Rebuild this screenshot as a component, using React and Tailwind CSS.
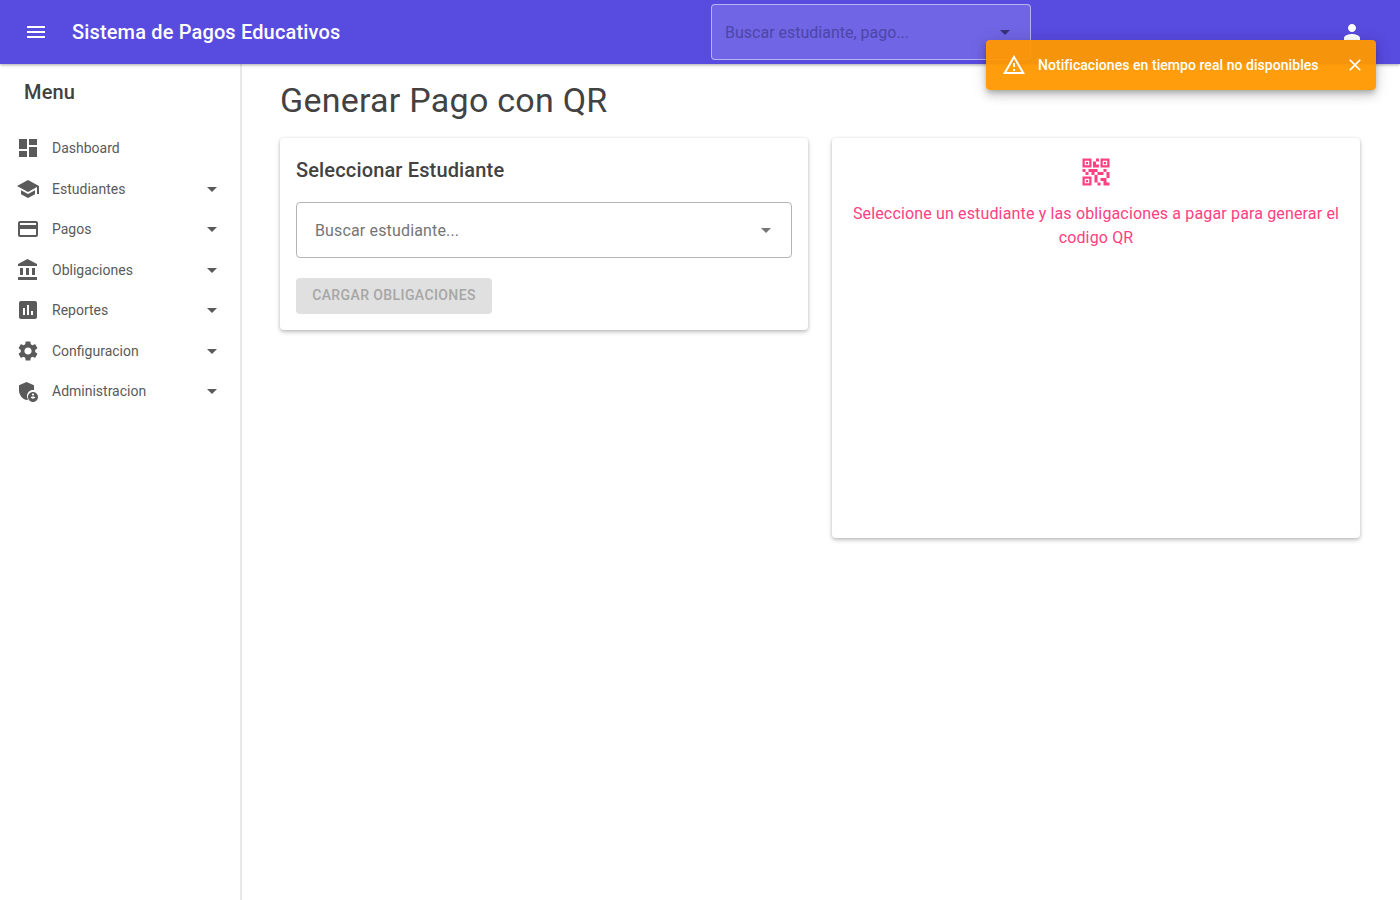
import React from 'react';

const Icon = ({ d, className = 'w-6 h-6', children }) => (
  <svg viewBox="0 0 24 24" fill="currentColor" className={className}>
    {d && <path d={d} />}
    {children}
  </svg>
);

const icons = {
  menu: 'M3 18h18v-2H3v2zm0-5h18v-2H3v2zm0-7v2h18V6H3z',
  dashboard: 'M3 13h8V3H3v10zm0 8h8v-6H3v6zm10 0h8V11h-8v10zm0-18v6h8V3h-8z',
  school: 'M5 13.18v4L12 21l7-3.82v-4L12 17l-7-3.82zM12 3 1 9l11 6 9-4.91V17h2V9L12 3z',
  payment: 'M20 4H4c-1.11 0-1.99.89-1.99 2L2 18c0 1.11.89 2 2 2h16c1.11 0 2-.89 2-2V6c0-1.11-.89-2-2-2zm0 14H4v-6h16v6zm0-10H4V6h16v2z',
  bank: 'M4 10v7h3v-7H4zm6 0v7h3v-7h-3zM2 22h19v-3H2v3zm14-12v7h3v-7h-3zm-4.5-9L2 6v2h19V6l-9.5-5z',
  assessment: 'M19 3H5c-1.1 0-2 .9-2 2v14c0 1.1.9 2 2 2h14c1.1 0 2-.9 2-2V5c0-1.1-.9-2-2-2zM9 17H7v-7h2v7zm4 0h-2V7h2v10zm4 0h-2v-4h2v4z',
  settings: 'M19.14 12.94c.04-.3.06-.61.06-.94 0-.32-.02-.64-.07-.94l2.03-1.58c.18-.14.23-.41.12-.61l-1.92-3.32c-.12-.22-.37-.29-.59-.22l-2.39.96c-.5-.38-1.03-.7-1.62-.94l-.36-2.54c-.04-.24-.24-.41-.48-.41h-3.84c-.24 0-.43.17-.47.41l-.36 2.54c-.59.24-1.13.57-1.62.94l-2.39-.96c-.22-.08-.47 0-.59.22L2.74 8.87c-.12.21-.08.47.12.61l2.03 1.58c-.05.3-.09.63-.09.94s.02.64.07.94l-2.03 1.58c-.18.14-.23.41-.12.61l1.92 3.32c.12.22.37.29.59.22l2.39-.96c.5.38 1.03.7 1.62.94l.36 2.54c.05.24.24.41.48.41h3.84c.24 0 .44-.17.47-.41l.36-2.54c.59-.24 1.13-.56 1.62-.94l2.39.96c.22.08.47 0 .59-.22l1.92-3.32c.12-.22.07-.47-.12-.61l-2.01-1.58zM12 15.6c-1.98 0-3.6-1.62-3.6-3.6s1.62-3.6 3.6-3.6 3.6 1.62 3.6 3.6-1.62 3.6-3.6 3.6z',
  admin: 'M17 11c.34 0 .67.04 1 .09V6.27L10.5 3 3 6.27v4.91c0 4.54 3.2 8.79 7.5 9.82.55-.13 1.08-.32 1.6-.55-.69-.98-1.1-2.17-1.1-3.45 0-3.31 2.69-6 6-6zM17 13c-2.76 0-5 2.24-5 5s2.24 5 5 5 5-2.24 5-5-2.24-5-5-5zm0 1.38c.62 0 1.12.51 1.12 1.12s-.51 1.12-1.12 1.12-1.12-.51-1.12-1.12.5-1.12 1.12-1.12zm0 5.37c-.93 0-1.74-.46-2.24-1.17.05-.72 1.51-1.08 2.24-1.08s2.19.36 2.24 1.08c-.5.71-1.31 1.17-2.24 1.17z',
  person: 'M12 12c2.21 0 4-1.79 4-4s-1.79-4-4-4-4 1.79-4 4 1.79 4 4 4zm0 2c-2.67 0-8 1.34-8 4v2h16v-2c0-2.66-5.33-4-8-4z',
  warning: 'M12 5.99 19.53 19H4.47L12 5.99M12 2 1 21h22L12 2zm1 14h-2v2h2v-2zm0-6h-2v4h2v-4z',
  close: 'M19 6.41 17.59 5 12 10.59 6.41 5 5 6.41 10.59 12 5 17.59 6.41 19 12 13.41 17.59 19 19 17.59 13.41 12z',
  arrow: 'M7 10l5 5 5-5z',
  qr: 'M15 21h-2v-2h2v2zm-2-7h-2v5h2v-5zm8-2h-2v4h2v-4zm-2-2h-2v2h2v-2zM7 12H5v2h2v-2zm-2-2H3v2h2v-2zm7-5h2V3h-2v2zm-7.5-.5v3h3v-3h-3zM9 9H3V3h6v6zm-4.5 10.5v-3h3v3h-3zM3 21h6v-6H3v6zM19.5 4.5h-3v3h3v-3zM15 3h6v6h-6V3zm4 16v-3h-4v2h2v3h4v-2h-2zm-2-7h-4v2h4v-2zm-4-2H7v2h2v2h2v-2h2v-2zm1-1V7h-2V5h-2v4h4zM6.75 5.25h-1.5v1.5h1.5v-1.5zm0 12h-1.5v1.5h1.5v-1.5zm12-12h-1.5v1.5h1.5v-1.5z',
};

const menuItems = [
  { label: 'Dashboard', icon: icons.dashboard },
  { label: 'Estudiantes', icon: icons.school, caret: true },
  { label: 'Pagos', icon: icons.payment, caret: true },
  { label: 'Obligaciones', icon: icons.bank, caret: true },
  { label: 'Reportes', icon: icons.assessment, caret: true },
  { label: 'Configuracion', icon: icons.settings, caret: true },
  { label: 'Administracion', icon: icons.admin, caret: true },
];

export default function App() {
  return (
    <div className="relative h-[900px] overflow-hidden bg-white font-['Roboto',sans-serif]">
      {/* Top bar */}
      <header className="relative z-10 flex h-16 items-center bg-[#584be0] pl-6 pr-9 text-white shadow-[0_1px_3px_rgba(0,0,0,0.35)]">
        <Icon d={icons.menu} />
        <h1 className="ml-6 text-[20px] font-medium tracking-[0.15px]">Sistema de Pagos Educativos</h1>
        <div className="ml-auto mr-[309px] flex h-14 w-[320px] items-center justify-between rounded border border-white/50 bg-white/15 pl-[13px] pr-[13px]">
          <span className="pt-0.5 text-base text-[#4d45a8]">Buscar estudiante, pago...</span>
          <Icon d={icons.arrow} className="h-6 w-6 text-[#37317a]" />
        </div>
        <Icon d={icons.person} />
      </header>

      {/* Toast */}
      <div className="absolute right-6 top-10 z-20 flex h-[50px] w-[390px] items-center rounded bg-[#ff9800]/95 pl-4 pr-[11px] text-white shadow-[0_3px_5px_-1px_rgba(0,0,0,0.2),0_6px_10px_0_rgba(0,0,0,0.14),0_1px_18px_0_rgba(0,0,0,0.12)]">
        <Icon d={icons.warning} />
        <span className="ml-3 text-sm font-medium tracking-[0.05px]">Notificaciones en tiempo real no disponibles</span>
        <Icon d={icons.close} className="ml-auto h-5 w-5" />
      </div>

      <div className="flex h-[836px]">
        {/* Sidebar */}
        <aside className="w-[242px] shrink-0 border-r-2 border-[#e8e8e8] pt-4 text-[#5a5a5a]">
          <h2 className="pl-6 text-[20px] font-medium leading-6 tracking-[0.15px] text-[#424242]">Menu</h2>
          <nav className="mt-6">
            {menuItems.map((item) => (
              <div key={item.label} className="flex h-[40.5px] items-center px-4">
                <Icon d={item.icon} />
                <span className="ml-3 text-sm">{item.label}</span>
                {item.caret && <Icon d={icons.arrow} className="ml-auto h-6 w-6" />}
              </div>
            ))}
          </nav>
        </aside>

        {/* Main */}
        <main className="flex-1 pl-[38px] pr-10 pt-4 text-[#424242]">
          <h1 className="text-[34px] font-normal leading-10 tracking-[0.25px]">Generar Pago con QR</h1>
          <div className="mt-[18px] grid grid-cols-2 items-start gap-6">
            <section className="rounded bg-white p-4 shadow-[0_2px_4px_rgba(0,0,0,0.25),0_0_3px_rgba(0,0,0,0.08)]">
              <h2 className="text-[20px] font-medium leading-8 tracking-[0.15px]">Seleccionar Estudiante</h2>
              <div className="mt-4 flex h-14 items-center justify-between rounded border border-[#b5b5b5] pl-[18px] pr-[13px] text-[#757575]">
                <span className="pt-0.5 text-base tracking-[0.15px]">Buscar estudiante...</span>
                <Icon d={icons.arrow} />
              </div>
              <button className="mt-5 h-9 w-[196px] rounded bg-[#e0e0e0] pb-0.5 text-sm font-medium uppercase tracking-[0.4px] text-[#a6a6a6]">
                Cargar obligaciones
              </button>
            </section>
            <section className="h-[400px] rounded bg-white p-4 text-center text-[#ff4081] shadow-[0_2px_4px_rgba(0,0,0,0.25),0_0_3px_rgba(0,0,0,0.08)]">
              <Icon d={icons.qr} className="mx-auto h-9 w-9" />
              <p className="mt-3 text-base leading-6 tracking-[0.15px]">
                Seleccione un estudiante y las obligaciones a pagar para generar el codigo QR
              </p>
            </section>
          </div>
        </main>
      </div>
    </div>
  );
}
